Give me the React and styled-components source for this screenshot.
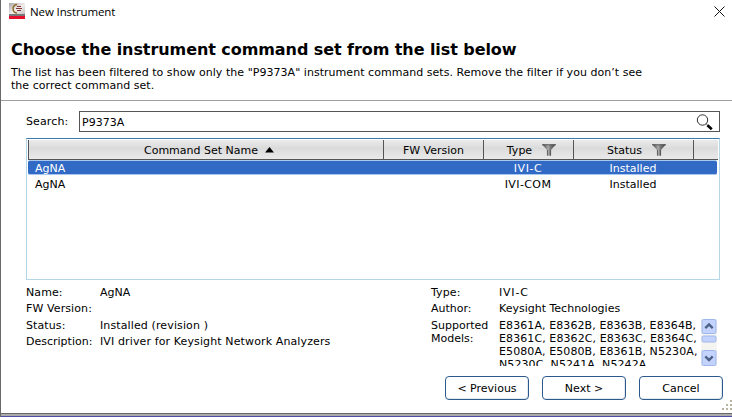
import React from 'react';
import styled, { createGlobalStyle } from 'styled-components';

const GlobalStyle = createGlobalStyle`
  * { box-sizing: border-box; }
  body { margin: 0; background: #fff; overflow: hidden; }
`;

const Dialog = styled.div`
  position: relative;
  display: flex;
  flex-direction: column;
  width: 732px;
  height: 417px;
  border-left: 1px solid #696969;
  background: #fff;
  color: #000;
  font: 11px/13px Verdana, "DejaVu Sans", sans-serif;
`;

const TitleBar = styled.header`
  display: flex;
  align-items: flex-start;
  height: 24px;
  flex: none;
  padding: 3px 7px 0 8px;
`;

const AppIcon = styled.svg`
  width: 16px;
  height: 16px;
  flex: none;
`;

const WindowTitle = styled.span`
  flex: 1;
  margin-left: 5px;
  font: 11.5px/18px "Open Sans", sans-serif;
  letter-spacing: -0.12px;
`;

const CloseIcon = styled.svg`
  width: 11px;
  height: 11px;
  margin-top: 3px;
`;

const Intro = styled.section`
  height: 77px;
  flex: none;
  padding: 15px 0 0 10px;
  border-bottom: 1px solid #a0a0a0;
`;

const Heading = styled.h1`
  margin: 0 0 5px;
  font-size: 16px;
  line-height: 22px;
  font-weight: bold;
  letter-spacing: -0.075px;
`;

const Line = styled.div`
  white-space: nowrap;
  height: 13px;
  letter-spacing: ${p => p.$ls || 0}px;
`;

const SearchRow = styled.div`
  display: flex;
  flex: none;
  align-items: center;
  margin: 10px 0 0 25px;
  height: 21px;
`;

const Label = styled.label`
  width: 53px;
  letter-spacing: 0.12px;
`;

const SearchBox = styled.div`
  display: flex;
  align-items: center;
  justify-content: space-between;
  width: 641px;
  height: 21px;
  padding: 1px 6px 0 2px;
  border: 1px solid #555;
`;

const SearchIcon = styled.svg`
  width: 17px;
  height: 17px;
`;

const Table = styled.div`
  flex: none;
  width: 694px;
  height: 142px;
  margin: 6px 0 0 25px;
  padding: 1px 1px 0 1px;
  border: 1px solid #b5d5e8;
  border-top-color: #3d7bad;
`;

const columns = '355px 100px 90px 120px 1fr';

const HeaderRow = styled.div`
  display: grid;
  grid-template-columns: ${columns};
  height: 20px;
  border-bottom: 1px solid #555;
  background: linear-gradient(#ebebeb 0%, #dadada 45%, #e0e0e0 60%, #e9e9e9 100%);
`;

const HeaderCell = styled.div`
  display: flex;
  align-items: center;
  justify-content: center;
  gap: ${p => p.$gap || 0}px;
  padding: 2px 0 0 ${p => p.$gap ? 6 : 0}px;
  border-left: 1px solid #555;
  white-space: nowrap;
`;

const SortArrow = styled.svg`
  width: 9px;
  height: 6px;
  margin-bottom: 1px;
`;

const FilterIcon = styled.svg`
  width: 14px;
  height: 12px;
  margin-bottom: 1px;
`;

const Row = styled.div`
  display: grid;
  grid-template-columns: ${columns};
  align-items: center;
  height: ${p => p.$selected ? 15 : 17}px;
  margin-right: 1px;
  padding-top: 2px;
  border: solid ${p => p.$selected ? '#a9c8f0' : 'transparent'};
  border-width: ${p => p.$selected ? '1px 0' : '0'};
  border-radius: 2px;
  background: ${p => p.$selected ? '#316ac5' : 'transparent'};
  color: ${p => p.$selected ? '#fff' : '#000'};
  line-height: 12px;
`;

const Cell = styled.span`
  padding-left: ${p => p.$first ? 7 : 0}px;
  text-align: ${p => p.$first ? 'left' : 'center'};
  letter-spacing: ${p => p.$ls || 0}px;
`;

const Details = styled.section`
  display: flex;
  flex: none;
  height: 86px;
  padding: 6px 0 0 25px;
`;

const Column = styled.div`
  display: grid;
  grid-template-columns: ${p => p.$left ? '74px 331px' : '68px 219px'};
  grid-template-rows: 16px 17px 16px 1fr;
  align-content: start;
`;

const Models = styled.div`
  display: flex;
  height: 47px;
  overflow: hidden;
`;

const ModelText = styled.div`
  width: 202px;
`;

const Scrollbar = styled.svg`
  width: 16px;
  height: 47px;
  flex: none;
`;

const Buttons = styled.footer`
  display: flex;
  flex: none;
  margin: 10px 0 0 444px;
  gap: 13px;
`;

const Button = styled.button`
  width: 84px;
  height: 24px;
  padding: 0;
  border: 1px solid #2c5a8c;
  border-radius: 4px;
  background: #fff;
  box-shadow: inset -1px -1px #e3e9ef;
  color: #000;
  font: inherit;
`;

const BottomEdge = styled.div`
  margin-top: auto;
  height: 4px;
  flex: none;
  background: linear-gradient(#696969 0 1px, #aaa 1px 3px, #4f4da5 3px);
`;

const Grip = styled.svg`
  position: absolute;
  right: 0;
  bottom: 7px;
  width: 10px;
  height: 10px;
`;

function Funnel() {
  return (
    <FilterIcon viewBox="0 0 14 12">
      <defs>
        <linearGradient id="metal">
          <stop stopColor="#444" />
          <stop offset=".45" stopColor="#aaa" />
          <stop offset=".6" stopColor="#777" />
          <stop offset="1" stopColor="#444" />
        </linearGradient>
      </defs>
      <path d="M0 .3H14L9 6v5.7H5V6Z" fill="url(#metal)" />
      <path d="M0 .8H14M5.4 6v5.5M8.6 6v5.5" stroke="#505050" strokeWidth=".8" />
    </FilterIcon>
  );
}

export default function App() {
  return (
    <Dialog>
      <GlobalStyle />
      <TitleBar>
        <AppIcon viewBox="0 0 16 16">
          <defs>
            <linearGradient id="tile" x2="1" y2="1"><stop stopColor="#aaa5a5" /><stop offset=".55" stopColor="#f2eeee" /><stop offset="1" stopColor="#c8c0c0" /></linearGradient>
          </defs>
          <rect width="16" height="11" fill="url(#tile)" />
          <rect y="11" width="16" height="2" fill="#777" />
          <rect y="13" width="16" height="3" fill="#e60f2d" />
          <path d="M8 1.5C2.8 2 2.8 9.5 8 10" fill="none" stroke="#8a6820" strokeWidth="1.4" />
          <path d="M8 3.5h4M7 5.5h6M8 7.5h4" stroke="#833" />
        </AppIcon>
        <WindowTitle>New Instrument</WindowTitle>
        <CloseIcon viewBox="0 0 11 11"><path d="M.5.5l10 10M10.5.5l-10 10" stroke="#111" /></CloseIcon>
      </TitleBar>
      <Intro>
        <Heading>Choose the instrument command set from the list below</Heading>
        <Line $ls={0.04}>The list has been filtered to show only the "P9373A" instrument command sets. Remove the filter if you don’t see</Line>
        <Line $ls={0.04}>the correct command set.</Line>
      </Intro>
      <SearchRow>
        <Label>Search:</Label>
        <SearchBox>P9373A
          <SearchIcon viewBox="0 0 17 17">
            <circle cx="6.5" cy="6" r="5.2" fill="#fff" stroke="#333" />
            <path d="M10.2 9.8l1.5 1.4" stroke="#333" />
            <path d="M11.4 11.2l4.4 4" stroke="#000" strokeWidth="2.6" />
          </SearchIcon>
        </SearchBox>
      </SearchRow>
      <Table>
        <HeaderRow>
          <HeaderCell $gap={7}>Command Set Name<SortArrow viewBox="0 0 9 6"><path d="M4.5 0L9 5.5H0Z" /></SortArrow></HeaderCell>
          <HeaderCell>FW Version</HeaderCell>
          <HeaderCell $gap={10}>Type<Funnel /></HeaderCell>
          <HeaderCell $gap={10}>Status<Funnel /></HeaderCell>
          <HeaderCell />
        </HeaderRow>
        <Row $selected><Cell $first>AgNA</Cell><Cell /><Cell $ls={0.6}>IVI-C</Cell><Cell>Installed</Cell></Row>
        <Row><Cell $first>AgNA</Cell><Cell /><Cell $ls={0.4}>IVI-COM</Cell><Cell>Installed</Cell></Row>
      </Table>
      <Details>
        <Column $left>
          <Line $ls={0.1}>Name:</Line><Line>AgNA</Line>
          <Line $ls={0.1}>FW Version:</Line><span />
          <Line $ls={0.1}>Status:</Line><Line $ls={0.12}>Installed (revision )</Line>
          <Line>Description:</Line><Line $ls={0.12}>IVI driver for Keysight Network Analyzers</Line>
        </Column>
        <Column>
          <Line $ls={0.1}>Type:</Line><Line $ls={0.8}>IVI-C</Line>
          <Line>Author:</Line><Line>Keysight Technologies</Line>
          <div><Line>Supported</Line><Line>Models:</Line></div>
          <Models>
            <ModelText>
              <Line $ls={0.09}>E8361A, E8362B, E8363B, E8364B,</Line>
              <Line $ls={0.09}>E8361C, E8362C, E8363C, E8364C,</Line>
              <Line $ls={0.09}>E5080A, E5080B, E8361B, N5230A,</Line>
              <Line $ls={0.09}>N5230C, N5241A, N5242A,</Line>
            </ModelText>
            <Scrollbar viewBox="0 0 16 47">
              <rect width="16" height="47" fill="#f5f4f0" />
              <g fill="#c3d3fd" stroke="#9db7ea">
                <rect x="1" y=".5" width="14" height="14" rx="1.5" />
                <rect x="1" y="17" width="14" height="6" rx="1.5" />
                <rect x="1" y="31.5" width="14" height="15" rx="1.5" />
              </g>
              <path d="M4.3 9.2L8 5.5l3.7 3.7M4.3 37.3L8 41l3.7-3.7" fill="none" stroke="#4d6185" strokeWidth="2.4" />
            </Scrollbar>
          </Models>
        </Column>
      </Details>
      <Buttons>
        <Button>&lt; Previous</Button><Button>Next &gt;</Button><Button>Cancel</Button>
      </Buttons>
      <Grip viewBox="0 0 10 10"><path d="M8 0h2v2h-2zM4 4h2v2h-2zM8 4h2v2h-2zM0 8h2v2h-2zM4 8h2v2h-2zM8 8h2v2h-2z" fill="#b8b4a0" /></Grip>
      <BottomEdge />
    </Dialog>
  );
}
